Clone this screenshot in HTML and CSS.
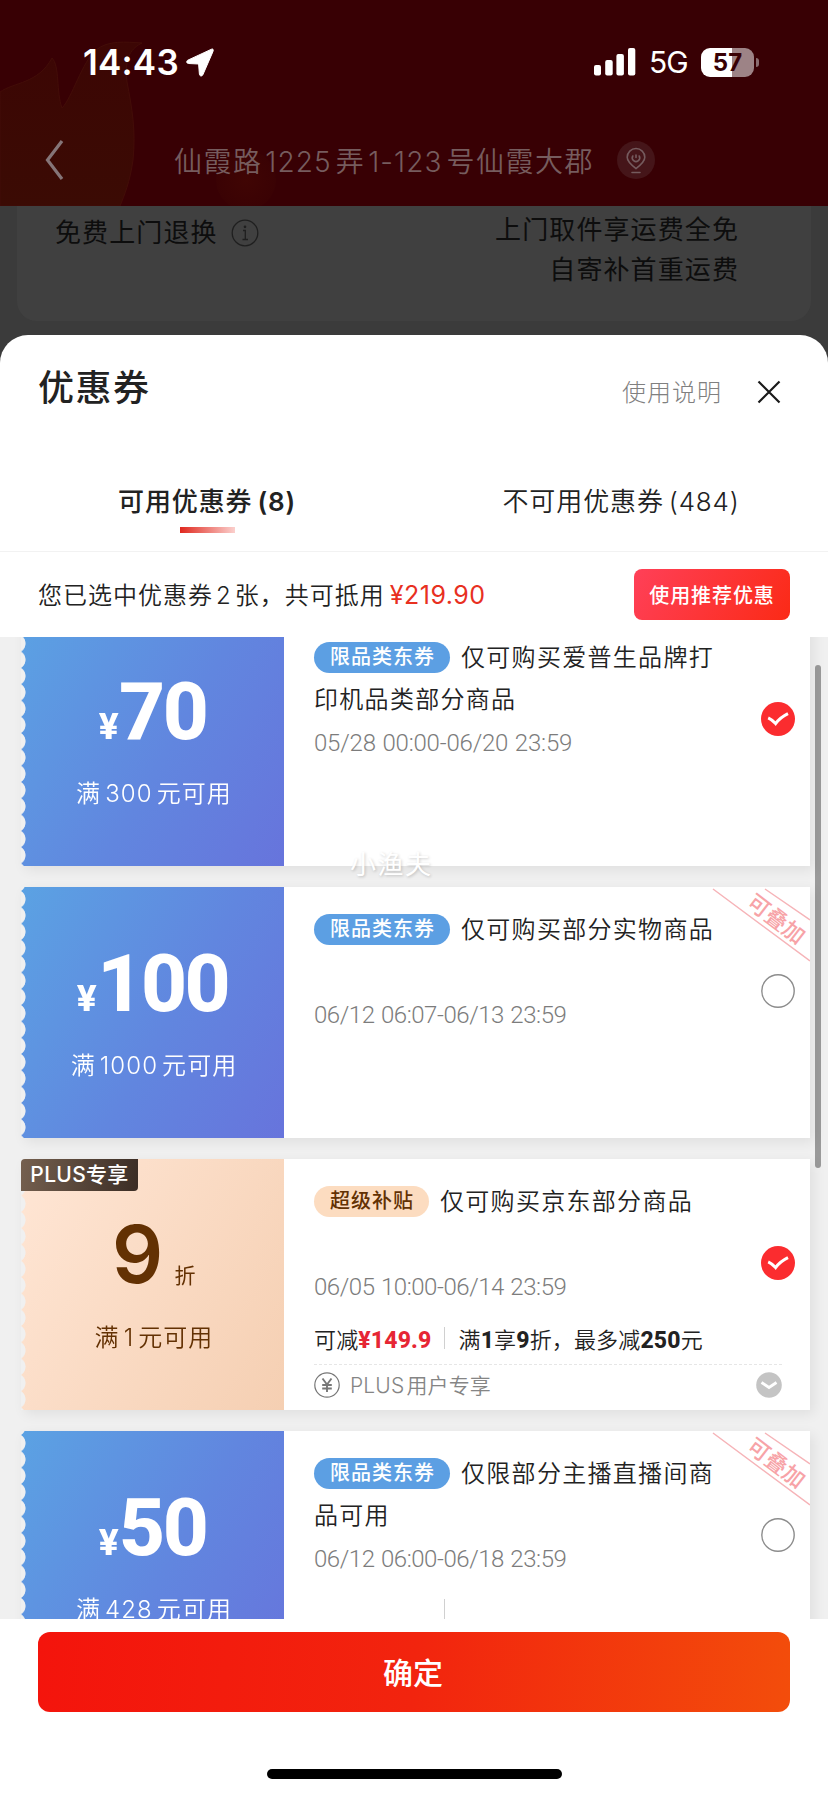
FILE: index.html
```html
<!DOCTYPE html>
<html lang="zh-CN">
<head>
<meta charset="utf-8">
<title>优惠券</title>
<link rel="stylesheet" href="styles.css">
</head>
<body>
<div class="phone">
  <header class="top">
    <svg class="flame" width="420" height="206" viewBox="0 0 420 206">
      <defs>
        <linearGradient id="fl" x1="0" y1="0" x2="0" y2="1"><stop offset="0" stop-color="#3c0604"/><stop offset="1" stop-color="#3b0b04"/></linearGradient>
        <radialGradient id="orb"><stop offset="0" stop-color="#400504"/><stop offset="1" stop-color="#3a0204"/></radialGradient>
      </defs>
      <path d="M0 92C14 82 38 84 52 58C60 66 56 92 62 108C72 98 82 62 96 50C108 40 126 42 142 43C132 48 124 56 127 82C132 108 136 130 133 160C130 182 124 196 120 206H0Z" fill="url(#fl)" stroke="#430d08" stroke-width="1"/>
      <circle cx="246" cy="180" r="30" fill="url(#orb)"/>
    </svg>
    <div class="status">
      <div class="clock">14:43</div>
      <svg class="loc" width="28" height="29" viewBox="0 0 28 29"><path d="M25.500 1.200 1.800 12.200C0 13.200.6 15.400 2.600 15.500L12.600 16 13.400 26C13.600 28.400 16 28.600 16.900 26.700L27 3.400C27.700 1.700 27 .5 25.500 1.200Z" fill="#fff" stroke="#fff" stroke-width="1"/></svg>
      <div class="grow"></div>
      <svg width="42" height="28" viewBox="0 0 42 28" fill="#fff"><rect x="0" y="17" width="7" height="10.500" rx="2"/><rect x="11.200" y="12" width="7.500" height="15.500" rx="2"/><rect x="22.400" y="6" width="7.500" height="21.500" rx="2"/><rect x="34" y="0" width="7.300" height="27.500" rx="2"/></svg>
      <div class="net">5G</div>
      <div class="battery">57</div>
      <div class="nub"></div>
    </div>
    <div class="nav">
      <svg class="back" width="20" height="42" viewBox="0 0 20 42"><path d="M17 2 2.500 21 17 40" fill="none" stroke="#857578" stroke-width="3.200"/></svg>
      <div class="address">仙霞路<span class="n">1225</span>弄<span class="n">1-123</span>号仙霞大郡</div>
      <svg class="pin" width="38" height="38" viewBox="0 0 38 38"><circle cx="19" cy="19" r="19" fill="#451519"/><g fill="none" stroke="#755b5e" stroke-width="1.600" stroke-linecap="round"><path d="M19 27.500C15 24.500 10.200 21 10.200 16.300A8.800 8.800 0 0 1 27.800 16.300C27.800 21 23 24.500 19 27.500Z"/><path d="M15.800 15A3.700 3.700 0 1 0 22.200 15M19 14V16.500M15 31.500H23"/></g></svg>
    </div>
  </header>

  <section class="service">
    <div class="service-card">
      <div class="service-name">免费上门退换
        <svg width="28" height="28" viewBox="0 0 28 28" fill="none" stroke="#1f1f1f" stroke-width="1.300"><circle cx="14" cy="14" r="12.800"/><path d="M12 11.500H14.300V20.500M11.500 20.500H17"/><circle cx="14" cy="7.800" r=".7" fill="#1f1f1f"/></svg>
      </div>
      <div class="service-desc">上门取件享运费全免<br>自寄补首重运费</div>
    </div>
  </section>

  <main class="sheet">
    <div class="sheet-head">
      <h1>优惠券</h1>
      <div class="help">使用说明</div>
      <svg class="close" width="24" height="24" viewBox="0 0 24 24"><path d="M1.500 1.500 22.500 22.500M22.500 1.500 1.500 22.500" stroke="#1a1a1a" stroke-width="2.200"/></svg>
    </div>
    <div class="tabs">
      <div class="tab on"><span>可用优惠券<span class="cnt">(8)</span></span><i></i></div>
      <div class="tab"><span>不可用优惠券<span class="cnt">(484)</span></span></div>
    </div>
    <div class="summary">
      <div class="picked">您已选中优惠券<span class="n">2</span>张，共可抵用<span class="sum">¥219.90</span></div>
      <button class="recommend">使用推荐优惠</button>
    </div>

    <div class="list">
      <div class="scrollbar"></div>
      <div class="watermark">小渔夫</div>

      <article class="card">
        <div class="panel"><div class="amount"><small>¥</small>70</div><div class="cond">满<span class="n">300</span>元可用</div></div>
        <div class="body">
          <div class="title"><span class="tag">限品类东券</span>仅可购买爱普生品牌打印机品类部分商品</div>
          <div class="date wide">05/28 00:00-06/20 23:59</div>
        </div>
        <svg class="check" width="34" height="34" viewBox="0 0 34 34"><circle cx="17" cy="17" r="17" fill="#fb2c2f"/><path d="M7.200 15.800Q11 17.500 14.600 21.600 19 15.500 27 11.600" fill="none" stroke="#fff" stroke-width="3"/></svg>
      </article>

      <article class="card">
        <div class="panel"><div class="amount"><small>¥</small>100</div><div class="cond">满<span class="n">1000</span>元可用</div></div>
        <div class="body">
          <div class="title"><span class="tag">限品类东券</span>仅可购买部分实物商品</div>
          <div class="date">06/12 06:07-06/13 23:59</div>
        </div>
        <svg class="stack" width="98" height="76" viewBox="0 0 98 76"><path d="M1 1 98 73M53 1 98 32" stroke="#f6b4b8" stroke-width="1.500"/><text transform="translate(64.500 31) rotate(37.500)" text-anchor="middle" y="8">可叠加</text></svg>
        <svg class="check" width="34" height="34" viewBox="0 0 34 34"><circle cx="17" cy="17" r="16.200" fill="none" stroke="#8c8c8c" stroke-width="1.400"/></svg>
      </article>

      <article class="card plus">
        <div class="panel"><div class="amount off">9<small>折</small></div><div class="cond">满<span class="n">1</span>元可用</div></div>
        <div class="plus-flag">PLUS专享</div>
        <div class="body">
          <div class="title"><span class="tag">超级补贴</span>仅可购买京东部分商品</div>
          <div class="date">06/05 10:00-06/14 23:59</div>
          <div class="saving"><span>可减<b class="red">¥149.9</b></span><i></i><span>满<b>1</b>享<b>9</b>折，最多减<b>250</b>元</span></div>
          <div class="foot">
            <svg width="26" height="26" viewBox="0 0 26 26" fill="none" stroke="#777"><circle cx="13" cy="13" r="12.200" stroke-width="1.200"/><path d="M8.500 6.500 13 12.500 17.500 6.500M13 12.500V20M8.200 13H17.800M8.200 16.500H17.800" stroke-width="1.900"/></svg>
            <span>PLUS<em>用户专享</em></span>
            <svg class="more" width="26" height="26" viewBox="0 0 26 26"><circle cx="13" cy="13" r="12.800" fill="#c4c4c4"/><path d="M5.500 10.500 13 15.500 20.500 10.500" fill="none" stroke="#fff" stroke-width="2.800"/></svg>
          </div>
        </div>
        <svg class="check" width="34" height="34" viewBox="0 0 34 34"><circle cx="17" cy="17" r="17" fill="#fb2c2f"/><path d="M7.200 15.800Q11 17.500 14.600 21.600 19 15.500 27 11.600" fill="none" stroke="#fff" stroke-width="3"/></svg>
      </article>

      <article class="card">
        <div class="panel"><div class="amount"><small>¥</small>50</div><div class="cond">满<span class="n">428</span>元可用</div></div>
        <div class="body">
          <div class="title"><span class="tag">限品类东券</span>仅限部分主播直播间商品可用</div>
          <div class="date">06/12 06:00-06/18 23:59</div>
          <div class="saving"><i class="lone"></i></div>
        </div>
        <svg class="stack" width="98" height="76" viewBox="0 0 98 76"><path d="M1 1 98 73M53 1 98 32" stroke="#f6b4b8" stroke-width="1.500"/><text transform="translate(64.500 31) rotate(37.500)" text-anchor="middle" y="8">可叠加</text></svg>
        <svg class="check" width="34" height="34" viewBox="0 0 34 34"><circle cx="17" cy="17" r="16.200" fill="none" stroke="#8c8c8c" stroke-width="1.400"/></svg>
      </article>
    </div>

    <footer class="bottom">
      <button class="confirm">确定</button>
      <div class="home"></div>
    </footer>
  </main>
</div>
</body>
</html>
```
FILE: styles.css
```css
* { box-sizing: border-box; margin: 0; padding: 0; }
body { background: #3b3b3b; }
button { border: 0; font: inherit; }
svg { display: block; flex: none; }

.phone {
  width: 828px;
  height: 1796px;
  overflow: hidden;
  display: flex;
  flex-direction: column;
  background: #3b3b3b;
  font-family: Inter, "Noto Sans CJK SC", sans-serif;
  font-weight: 400;
  color: #222;
  white-space: nowrap;
}
.n { margin: 0 4px; }

/* dimmed page header */
.top { position: relative; flex: none; height: 206px; background: #380004; }
.flame { position: absolute; left: 0; top: 0; }
.status {
  position: relative;
  display: flex;
  align-items: center;
  height: 124px;
  padding: 0 69px 0 83px;
  color: #fff;
}
.clock { width: 103px; font-size: 35px; font-weight: 600; line-height: 40px; letter-spacing: .2px; }
.grow { flex: 1; }
.net { margin-left: 13px; width: 52px; font-size: 30px; line-height: 36px; letter-spacing: -1px; }
.battery {
  width: 53px;
  height: 29px;
  border-radius: 9px;
  background: linear-gradient(90deg, #fff 58%, #9d8386 58%);
  color: #380004;
  font-size: 24px;
  font-weight: 700;
  line-height: 29px;
  text-align: center;
}
.nub { width: 3px; height: 9px; margin-left: 2px; border-radius: 0 4px 4px 0; background: #8a6c70; }
.nav { position: relative; display: flex; align-items: center; height: 72px; padding: 0 0 1px 45px; color: #765c5e; }
.address { margin-left: 109px; width: 443px; font-size: 28px; letter-spacing: 1.450px; font-weight: 350; }
.address .n { letter-spacing: 1.100px; margin: 0 4px 0 3px; }

.service { flex: none; height: 129px; padding: 0 17px; }
.service-card {
  display: flex;
  justify-content: space-between;
  height: 115px;
  padding: 4px 72px 0 38px;
  border-radius: 0 0 20px 20px;
  background: #404040;
  color: #0d0d0d;
  font-size: 26px;
  line-height: 40px;
  letter-spacing: 1.100px;
}
.service-name { display: flex; align-items: center; gap: 13px; height: 46px; }
.service-desc { text-align: right; }

/* coupon sheet */
.sheet { flex: 1; display: flex; flex-direction: column; min-height: 0; border-radius: 28px 28px 0 0; background: #fff; }
.sheet-head { flex: none; display: flex; align-items: center; height: 116px; padding: 0 47px 12px 38px; }
.sheet-head h1 { flex: 1; margin-bottom: 4px; font-size: 36px; font-weight: 500; letter-spacing: 1.500px; }
.help { margin: 7px 35px 0 0; font-size: 24px; font-weight: 300; letter-spacing: 1px; color: #808080; }
.close { margin-top: 10px; }
.tabs { flex: none; display: flex; height: 101px; padding-top: 31px; border-bottom: 1px solid #f2f2f2; }
.tab { flex: 1; display: flex; flex-direction: column; align-items: center; font-size: 26px; line-height: 40px; letter-spacing: .9px; font-weight: 350; }
.tab.on { font-weight: 500; }
.tab .cnt { margin-left: 5px; letter-spacing: .8px; }
.tab.on .cnt { font-weight: 600; }
.tab i { width: 55px; height: 6px; margin-top: 5px; background: linear-gradient(90deg, #e0281e, #fbd0cd); }
.summary { flex: none; display: flex; align-items: center; justify-content: space-between; height: 85px; padding: 0 38px; font-size: 24px; letter-spacing: 1px; font-weight: 350; }
.picked { padding-bottom: 2px; }
.picked .n { margin: 0 3px; }
.sum { margin-left: 5px; color: #e8301f; font-size: 25px; font-weight: 400; letter-spacing: .5px; }
.recommend {
  width: 156px;
  height: 51px;
  border-radius: 8px;
  background: linear-gradient(120deg, #ff4058, #fb2a16);
  color: #fff;
  font-size: 20px;
  font-weight: 500;
  letter-spacing: .9px;
}

.list { position: relative; flex: none; height: 982px; overflow: hidden; padding-left: 21px; background: #f0f0f0; }
.scrollbar { position: absolute; right: 7px; top: 28px; width: 6px; height: 503px; border-radius: 3px; background: #9a9a9a; }
.watermark { position: absolute; z-index: 2; left: 350px; top: 208px; font-size: 26px; line-height: 40px; letter-spacing: 1.500px; color: #fff; text-shadow: 1px 1px 3px rgba(0, 0, 0, .2); }

.card { position: relative; display: flex; width: 789px; height: 251px; margin-bottom: 21px; box-shadow: 4px 4px 12px rgba(0, 0, 0, .07); }
.watermark + .card { margin-top: -22px; }
.panel {
  width: 263px;
  padding-top: 62px;
  background: linear-gradient(120deg, #5ba2e3, #6186df 55%, #6774dc);
  color: #fff;
  text-align: center;
  -webkit-mask: radial-gradient(circle at -5px 50%, transparent 9.2px, #000 9.900px) 0 4px / 100% 16.300px;
  mask: radial-gradient(circle at -5px 50%, transparent 9.2px, #000 9.900px) 0 4px / 100% 16.300px;
}
.amount { height: 70px; font: 800 80px/70px Roboto, sans-serif; letter-spacing: -2.500px; }
.amount small { font-size: 37px; margin-right: 3px; }
.cond { margin-top: 27px; padding-left: 3px; font-size: 24px; line-height: 40px; letter-spacing: 1.100px; font-weight: 350; }
.body { flex: 1; padding: 22px 0 0 30px; background: #fff; }
.title { width: 412px; height: 84px; font-size: 24px; line-height: 42px; letter-spacing: 1.300px; font-weight: 350; white-space: normal; word-break: break-all; }
.tag {
  display: inline-block;
  height: 31px;
  margin-right: 11px;
  padding: 0 15px 0 16px;
  border-radius: 16px;
  background: #5c9fe3;
  color: #fff;
  font-size: 20px;
  font-weight: 500;
  line-height: 31px;
  letter-spacing: 1px;
  vertical-align: 2.500px;
}
.date { height: 42px; font: 300 24px/44px Roboto, sans-serif; color: #7c7c7c; letter-spacing: -.45px; word-spacing: 1px; }
.date.wide { letter-spacing: -.2px; }
.check { position: absolute; right: 15px; top: 87px; }
.stack { position: absolute; right: 0; top: 1px; }
.stack text { font-size: 22px; font-weight: 500; fill: #f7a3a7; }

.plus .panel { background: linear-gradient(120deg, #ffe6d5, #f5cfb2); color: #633103; }
.plus-flag {
  position: absolute;
  left: 0;
  top: 0;
  width: 117px;
  height: 32px;
  border-radius: 4px 0 4px 0;
  background: linear-gradient(100deg, #75604f, #3b2d25);
  color: #fff;
  font-size: 21px;
  font-weight: 500;
  line-height: 32px;
  letter-spacing: .3px;
  text-align: center;
}
.plus .tag { background: #fcdcc0; color: #633103; }
.amount.off { font-family: Inter, "Noto Sans CJK SC", sans-serif; font-weight: 600; line-height: 66px; }
.off small { font-size: 21px; font-weight: 400; margin: 0 0 0 14px; }
.saving { display: flex; align-items: center; height: 30px; margin-top: 16px; font-size: 22px; letter-spacing: .15px; font-weight: 350; }
.saving i { width: 1px; height: 22px; margin: 0 13px 0 13px; background: #d0d0d0; }
.saving i.lone { margin-left: 130px; }
.saving b { font-family: Roboto, sans-serif; font-size: 23px; font-weight: 800; }
.saving .red { color: #e62634; }
.foot { display: flex; align-items: center; width: 468px; height: 41px; margin-top: 11px; border-top: 1px dashed #e6e6e6; color: #858585; font-size: 21px; font-weight: 350; }
.foot span { flex: 1; margin: 0 0 2px 10px; letter-spacing: .15px; }
.foot em { font-style: normal; margin-left: 2px; }

.bottom { display: flex; flex-direction: column; align-items: center; padding-top: 13px; }
.confirm { width: 752px; height: 80px; padding: 0 2px 2px 0; border-radius: 12px; background: linear-gradient(95deg, #f4140c, #f2240e 50%, #f34d0b); color: #fff; font-size: 30px; font-weight: 500; }
.home { width: 295px; height: 10px; margin-top: 57px; border-radius: 5px; background: #000; }
```
